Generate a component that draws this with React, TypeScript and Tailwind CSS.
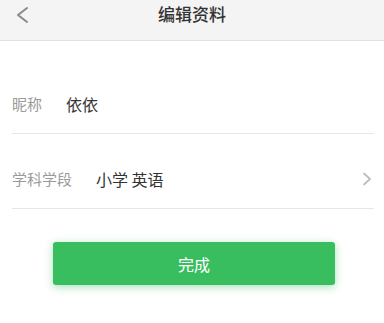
import React from "react";

export default function App() {
  return (
    <div
      className="w-[384px] h-[323px] bg-white overflow-hidden"
      style={{ fontFamily: '"Noto Sans CJK SC", "Noto Sans", sans-serif' }}
    >
      <div className="relative h-[41px] bg-[#f4f4f4] border-b border-[#e2e2e2] flex items-center justify-center">
        <svg
          className="absolute left-[15px] top-[6px]"
          width="14"
          height="18"
          viewBox="0 0 14 18"
          fill="none"
        >
          <path d="M12 2 L3 9 L12 16" stroke="#8a8a8a" strokeWidth="2" strokeLinecap="round" strokeLinejoin="round" />
        </svg>
        <span className="text-[17px] leading-none text-[#333] -mt-[13px] font-medium">编辑资料</span>
      </div>

      <div className="ml-3 mr-[10px]">
        <div className="mt-[40px] h-[53px] pb-[6px] flex items-center gap-[24px] border-b border-[#e6e6e6]">
          <span className="text-[15px] text-[#9a9a9a]">昵称</span>
          <span className="text-[16px] text-[#333]">依依</span>
        </div>
        <div className="mt-[21px] h-[54px] pb-[5px] flex items-center gap-[24px] border-b border-[#e6e6e6]">
          <span className="text-[15px] text-[#9a9a9a]">学科学段</span>
          <span className="text-[16px] text-[#333] flex-1">小学 英语</span>
          <svg className="mr-[2px]" width="10" height="14" viewBox="0 0 10 14" fill="none">
            <path d="M2 1.5 L8 7 L2 12.5" stroke="#bdbdbd" strokeWidth="1.8" strokeLinecap="round" strokeLinejoin="round" />
          </svg>
        </div>
      </div>

      <div className="mt-[33px] ml-[53px] w-[282px] h-[43px] rounded-[3px] bg-[#38bd5f] shadow-[0_2px_8px_rgba(56,189,95,0.45)] flex items-center justify-center">
        <span className="text-[16px] text-white">完成</span>
      </div>
    </div>
  );
}
